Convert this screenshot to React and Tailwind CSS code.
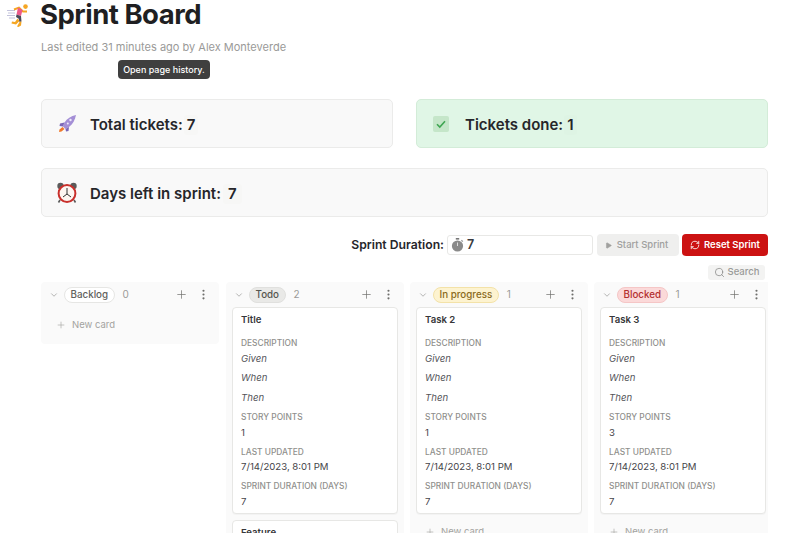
import React from 'react'
import { ChevronDown, Plus, EllipsisVertical, RefreshCw, Search, Play } from 'lucide-react'

const font = { fontFamily: 'Inter, "Liberation Sans", sans-serif' }

const todoCards = [
  { title: 'Title', points: 1 },
  { title: 'Feature', points: 1 },
]

const columns = [
  { name: 'Backlog', count: 0, pill: 'bg-white border border-[#e6e6e4] text-[#5f5f5c]', cards: [] },
  { name: 'Todo', count: 2, pill: 'bg-[#e9e9e7] border border-[#e0e0de] text-[#55554f]', cards: todoCards },
  { name: 'In progress', count: 1, pill: 'bg-[#fdf3d0] border border-[#f3e2a8] text-[#8a6a1c]', cards: [{ title: 'Task 2', points: 1 }] },
  { name: 'Blocked', count: 1, pill: 'bg-[#fbd9d9] border border-[#f5c6c6] text-[#b32f2f]', cards: [{ title: 'Task 3', points: 3 }] },
]

function Runner() {
  return (
    <svg width="22" height="24" viewBox="0 0 22 24" className="shrink-0">
      <circle cx="18.5" cy="2.6" r="2.3" fill="#f5a623" />
      <path d="M0 6.5h8M1 9h7M0 11.5h8M2 14h6" stroke="#c3c3dc" strokeWidth="1.2" />
      <path d="M7 5.5 L12 3.5 L16 7.5 L20 7.5" stroke="#f5a623" strokeWidth="1.9" fill="none" />
      <path d="M11 3.5 L15.5 6 L14 12 L9.5 10.5 Z" fill="#ec5a8b" />
      <path d="M9.5 10.5 L14 12 L14.5 17.5 L12.5 18 L11.5 14.5 L9 13 Z" fill="#4a4a5a" />
      <path d="M10.5 14.5 L8 18 L5 17.5 L4.5 19.5 L9 20.5 L12.5 17" fill="#f5a623" />
      <path d="M12.5 18 L14.5 17.5 L14 21.5 L11.5 23 L10 22.5 Z" fill="#f5a623" />
    </svg>
  )
}

function Rocket() {
  return (
    <svg width="19" height="19" viewBox="0 0 19 19" className="shrink-0">
      <path d="M18 1 C13 2 9 4.5 6.5 8.5 L5 12.5 L7.5 15 L11 13 C15 10 17 6 18 1 Z" fill="#a48fd6" />
      <path d="M6.5 8.5 L2 9.5 L1.5 12 L5 12.5 Z M11 13 L10.5 17 L8 17.5 L7.5 15 Z" fill="#7c68b8" />
      <circle cx="12.5" cy="6" r="1.2" fill="#efe9fb" />
      <circle cx="9.8" cy="9.5" r="1" fill="#efe9fb" />
      <path d="M4.5 13 L6.5 15 L3.5 17.5 L1 18 L1.5 15.5 Z" fill="#f0792b" />
    </svg>
  )
}

function Check() {
  return (
    <div className="flex h-[16px] w-[16px] shrink-0 items-center justify-center rounded-[2px] bg-[#c5e6c9]">
      <svg width="12" height="12" viewBox="0 0 12 12">
        <path d="M2 6.2 L4.8 9 L10 3.2" stroke="#3fa652" strokeWidth="1.6" fill="none" />
      </svg>
    </div>
  )
}

function Alarm() {
  return (
    <svg width="22" height="22" viewBox="0 0 22 22" className="-ml-[2px] shrink-0">
      <circle cx="4.5" cy="4" r="3.2" fill="#5b5b5b" />
      <circle cx="17.5" cy="4" r="3.2" fill="#5b5b5b" />
      <path d="M4 18 L2.5 20.5 M18 18 L19.5 20.5" stroke="#5b5b5b" strokeWidth="1.6" />
      <circle cx="11" cy="11.5" r="8.4" fill="#fdf6f1" stroke="#c9302c" strokeWidth="2" />
      <path d="M11 6 L11 12 L7 15 M11 12 L15 15" stroke="#333" strokeWidth="1" fill="none" />
    </svg>
  )
}

function Stopwatch() {
  return (
    <svg width="13" height="14" viewBox="0 0 13 14" className="shrink-0">
      <rect x="4.8" y="0" width="3.4" height="1.6" fill="#777" />
      <path d="M10.4 2.2 L11.8 3.6" stroke="#999" strokeWidth="1.3" />
      <circle cx="6.5" cy="8" r="5.6" fill="#8a8a8a" />
      <path d="M6.5 4.5 V8" stroke="#ddd" strokeWidth="1" />
    </svg>
  )
}

function StatCard({ icon, label, value, green, wide, className }) {
  return (
    <div className={`flex h-[49px] items-center rounded-[5px] border pl-[16px] ${green ? 'border-[#d3ecd8] bg-[#e0f6e6]' : 'border-[#ebebea] bg-[#f9f9f9]'} ${className}`}>
      <div className="flex w-[32px] justify-start">{icon}</div>
      <span className="mt-[3px] text-[15px] leading-[20px] font-semibold text-[#26262a]">{label}</span>
      <span className={`mt-[3px] rounded-[3px] text-[15px] leading-[20px] font-semibold text-[#26262a] ${wide ? 'ml-[2px] px-[5px]' : 'ml-[1px] px-[3px]'} ${green ? 'bg-[#def4e4]' : 'bg-[#f7f7f6]'}`}>{value}</span>
    </div>
  )
}

function Field({ label, value }) {
  return (
    <div className="mt-[5px]">
      <div className="text-[8.4px] leading-[14px] font-medium text-[#8f8f8c] uppercase">{label}</div>
      <div className="mt-[0.5px] text-[9.6px] leading-[15px] text-[#45454a]">{value}</div>
    </div>
  )
}

function Card({ card }) {
  return (
    <div className="h-[207px] shrink-0 rounded-[4px] border border-[#e7e7e5] bg-white px-[8px] pt-[5px] shadow-[0_1px_1px_rgba(0,0,0,0.03)]">
      <div className="text-[9.6px] leading-[14px] font-semibold text-[#37373a]">{card.title}</div>
      <div className="mt-[9px] text-[8.4px] leading-[14px] font-medium text-[#8f8f8c] uppercase">Description</div>
      <div className="mt-[0.5px] flex flex-col gap-[4px] text-[9.6px] leading-[15.5px] text-[#55555a] italic">
        <div>Given</div>
        <div>When</div>
        <div>Then</div>
      </div>
      <Field label="Story points" value={card.points} />
      <Field label="Last updated" value="7/14/2023, 8:01 PM" />
      <Field label="Sprint duration (days)" value="7" />
    </div>
  )
}

function Column({ col }) {
  const empty = col.cards.length === 0
  return (
    <div className={`w-[178px] shrink-0 rounded-[4px] bg-[#fafafa] px-[6px] ${empty ? 'mr-[1px] h-[62px]' : 'h-[260px]'}`}>
      <div className="flex h-[25px] items-center">
        <ChevronDown size={10} strokeWidth={1.5} className="mr-[5px] ml-[2px] text-[#8a8a88]" />
        <span className={`rounded-full px-[5.5px] text-[9.8px] leading-[14px] font-medium ${col.pill}`}>{col.name}</span>
        <span className="ml-[8px] text-[10px] text-[#9b9b98]">{col.count}</span>
        <Plus size={13} strokeWidth={1.3} className="mr-[9px] ml-auto text-[#6f6f6c]" />
        <EllipsisVertical size={13} strokeWidth={2} className="mr-[3px] text-[#6f6f6c]" />
      </div>
      <div className="flex flex-col gap-[6px]">
        {col.cards.map(card => <Card key={card.title} card={card} />)}
      </div>
      <div className="mt-[11px] flex items-center gap-[6px] pl-[9px] text-[9.5px] leading-[14px] text-[#a3a3a0]">
        <Plus size={10} strokeWidth={1.5} />
        <span>New card</span>
      </div>
    </div>
  )
}

export default function App() {
  return (
    <div style={font} className="relative h-[533px] w-[806px] overflow-hidden bg-white">
      <div className="ml-[41px] w-[727px]">
        <div className="absolute top-[4px] left-[7px]"><Runner /></div>
        <h1 className="-ml-[1px] text-[27.5px] leading-[28px] font-bold tracking-[-0.5px] text-[#1f1f22]">Sprint Board</h1>
        <p className="mt-[10px] text-[11px] leading-[18px] text-[#9a9a98]">Last edited 31 minutes ago by Alex Monteverde</p>

        <div className="mt-[43px] flex gap-[23px]">
          <StatCard className="w-[352px]" icon={<Rocket />} label="Total tickets:" value="7" />
          <StatCard className="w-[352px]" icon={<Check />} label="Tickets done:" value="1" green />
        </div>
        <StatCard className="mt-[20px]" icon={<Alarm />} label="Days left in sprint:" value="7" wide />

        <div className="mt-[17px] flex h-[22px] items-center justify-end">
          <span className="mr-[3px] text-[12.2px] font-semibold text-[#26262a]">Sprint Duration:</span>
          <div className="flex h-[20px] w-[146px] items-center gap-[3px] rounded-[3px] border border-[#e8e8e6] bg-white pl-[3px]">
            <Stopwatch />
            <span className="text-[12.5px] font-semibold text-[#3a3a3e]">7</span>
          </div>
          <button className="ml-[4px] flex h-[22px] w-[82px] items-center justify-center gap-[5px] rounded-[4px] bg-[#efefee] pr-[3px] text-[9.5px] font-medium text-[#a0a09e]">
            <Play size={7} fill="currentColor" />
            Start Sprint
          </button>
          <button className="ml-[3px] flex h-[22px] w-[86px] items-center justify-center gap-[4px] rounded-[4px] bg-[#cc1212] text-[9.5px] font-semibold text-white">
            <RefreshCw size={10} strokeWidth={2} />
            Reset Sprint
          </button>
        </div>

        <div className="mt-[9px] flex justify-end pr-[3px]">
          <div className="flex h-[15px] w-[57px] items-center justify-center gap-[3px] rounded-[3px] bg-[#f3f3f2] text-[9.5px] font-medium text-[#9a9a98]">
            <Search size={11} strokeWidth={1.6} className="text-[#858583]" />
            Search
          </div>
        </div>

        <div className="mt-[2px] flex gap-[6px] overflow-hidden">
          {columns.map(col => <Column key={col.name} col={col} />)}
        </div>
      </div>

      <div className="absolute top-[60px] left-[118px] flex h-[19px] w-[92px] items-center justify-center rounded-[4px] bg-[#3f3f3f] text-[9px] font-medium text-white">
        Open page history.
      </div>
    </div>
  )
}
